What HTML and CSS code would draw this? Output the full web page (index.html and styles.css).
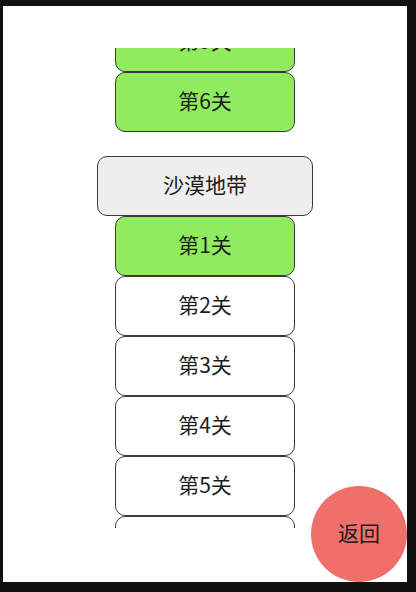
FILE: index.html
```html
<!DOCTYPE html>
<html lang="zh">
<head>
<meta charset="utf-8">
<title>关卡</title>
<link rel="stylesheet" href="styles.css">
</head>
<body>
<div class="screen">
  <div class="list">
    <div class="item done first">第5关</div>
    <div class="item done">第6关</div>
    <div class="item section">沙漠地带</div>
    <div class="item done">第1关</div>
    <div class="item">第2关</div>
    <div class="item">第3关</div>
    <div class="item">第4关</div>
    <div class="item">第5关</div>
    <div class="item">第6关</div>
  </div>
  <div class="back">返回</div>
</div>
</body>
</html>
```

FILE: styles.css
```css
html, body {
  margin: 0;
  padding: 0;
  background: #111111;
}
body {
  width: 416px;
  height: 592px;
  overflow: hidden;
  font-family: "Noto Sans CJK SC", "Noto Sans", sans-serif;
  color: #1c1c1c;
}
.screen {
  margin: 6px 0 0 3px;
  width: 404px;
  height: 576px;
  background: #ffffff;
  position: relative;
  overflow: hidden;
}
.list {
  margin-top: 42px;
  height: 480px;
  overflow: hidden;
  display: flex;
  flex-direction: column;
  align-items: center;
}
.item {
  flex-shrink: 0;
  box-sizing: border-box;
  width: 180px;
  height: 60px;
  padding-bottom: 4px;
  border: 1px solid #3a3a3a;
  border-radius: 10px;
  background: #ffffff;
  display: flex;
  align-items: center;
  justify-content: center;
  font-size: 21px;
  line-height: 1;
}
.item.first {
  margin-top: -36px;
}
.item.done {
  background: #8fec5f;
}
.item.section {
  width: 216px;
  margin-top: 24px;
  background: #eeeeee;
}
.back {
  position: absolute;
  right: 0;
  bottom: 0;
  width: 96px;
  height: 96px;
  padding-bottom: 4px;
  box-sizing: border-box;
  border-radius: 50%;
  background: #ef6f6a;
  display: flex;
  align-items: center;
  justify-content: center;
  font-size: 21px;
  line-height: 1;
  color: #1c1c1c;
}
```
